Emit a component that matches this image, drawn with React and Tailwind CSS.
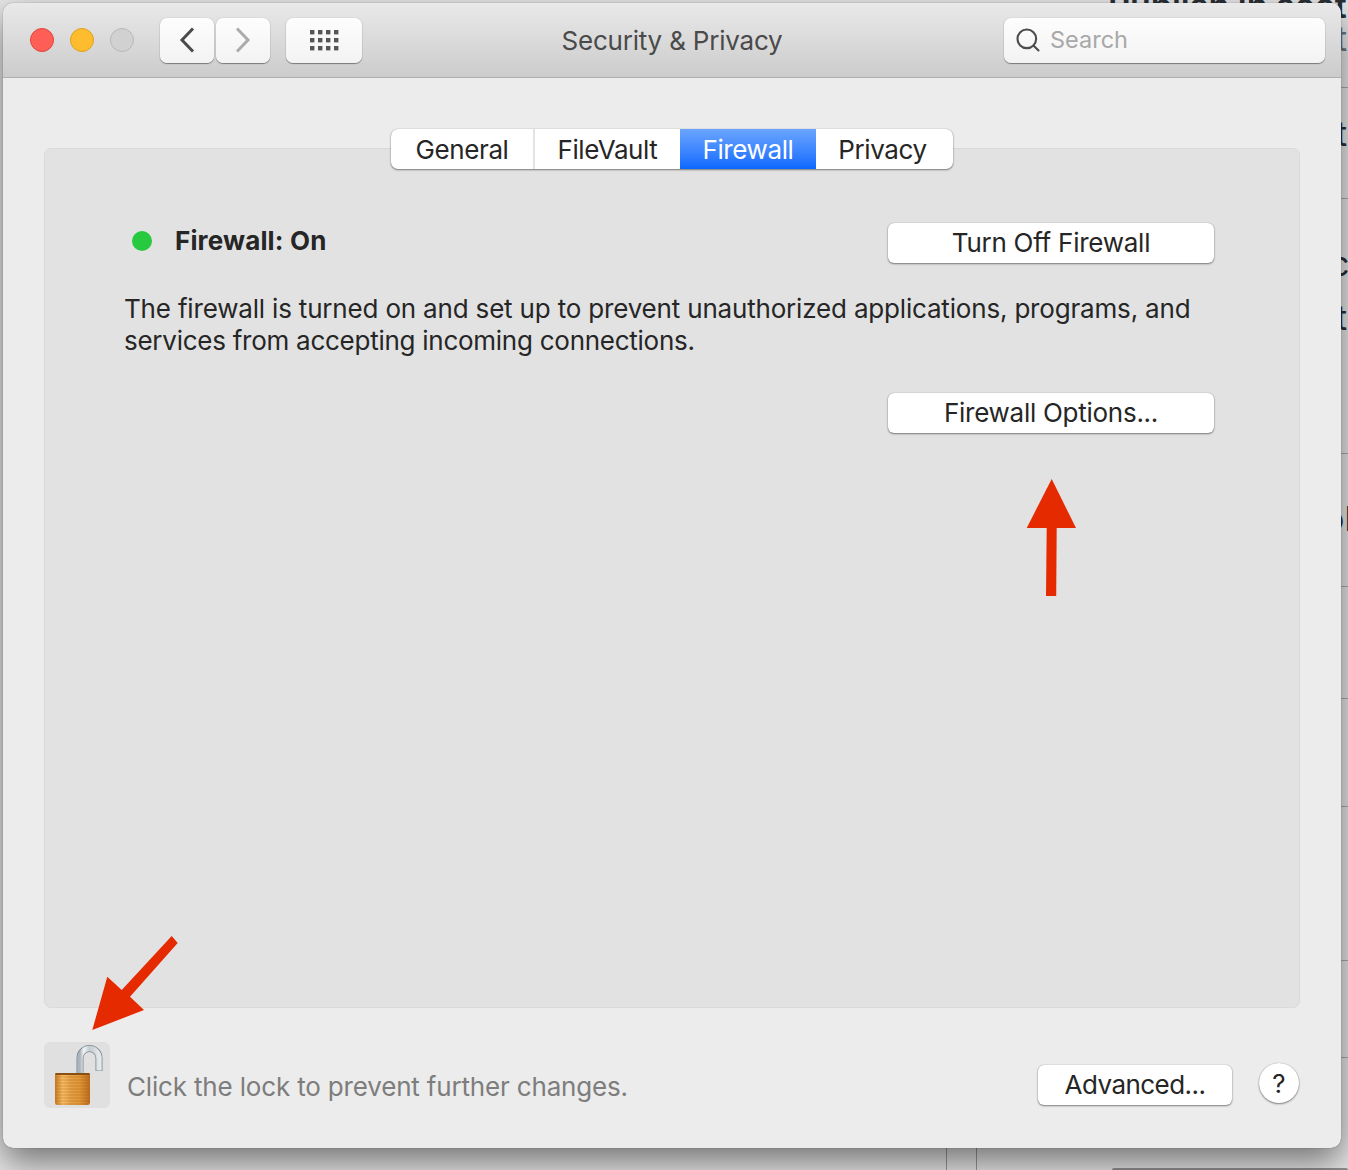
import React from "react";
import { Search } from "lucide-react";

const FONT = "font-['Inter','Noto_Sans',sans-serif]";

// macOS style white push button
const MacButton = ({ children, className = "" }) => (
  <button className={`flex items-center justify-center rounded-[6px] bg-white text-[26px] leading-none text-[#262626] shadow-[0_1px_2px_rgba(0,0,0,0.45),0_0_1px_rgba(0,0,0,0.35)] ${className}`}>
    {children}
  </button>
);

const ToolButton = ({ children, className = "" }) => (
  <div className={`flex h-[45px] items-center justify-center rounded-[7px] bg-gradient-to-b from-[#fdfdfd] to-[#f3f3f3] shadow-[0_1px_1px_rgba(0,0,0,0.4),0_0_1px_rgba(0,0,0,0.35)] ${className}`}>
    {children}
  </div>
);

const Chevron = ({ points, color }) => (
  <svg width="16" height="26" viewBox="0 0 16 26">
    <polyline points={points} fill="none" stroke={color} strokeWidth="3" />
  </svg>
);

const GridIcon = () => (
  <svg width="30" height="22" viewBox="0 0 30 22" fill="#555">
    {[0, 8, 16].map((y) =>
      [0, 8, 16, 24].map((x) => <rect key={`${x}-${y}`} x={x + 1} y={y + 1} width="4.4" height="4.4" />)
    )}
  </svg>
);

const Tab = ({ label, active, className = "" }) => (
  <div className={`flex h-full items-center justify-center text-[26px] tracking-[-0.4px] ${active ? "bg-gradient-to-b from-[#6aa5ff] to-[#0a68fe] text-white" : "text-[#262626]"} ${className}`}>
    {label}
  </div>
);

const OpenLock = () => (
  <svg width="66" height="66" viewBox="0 0 66 66">
    <defs>
      <linearGradient id="shackle" x1="0" y1="0" x2="1" y2="0">
        <stop offset="0" stopColor="#aab4bc" />
        <stop offset="0.2" stopColor="#f2f5f6" />
        <stop offset="0.5" stopColor="#c3ccd2" />
        <stop offset="1" stopColor="#e3e8ea" />
      </linearGradient>
      <linearGradient id="brass" x1="0" y1="0" x2="1" y2="0">
        <stop offset="0" stopColor="#c77a22" />
        <stop offset="0.22" stopColor="#f6bd66" />
        <stop offset="0.45" stopColor="#e6a248" />
        <stop offset="0.7" stopColor="#e09838" />
        <stop offset="1" stopColor="#bb6c1e" />
      </linearGradient>
    </defs>
    <path d="M36 33 V16 A9.5 9.5 0 0 1 55 16 V29" fill="none" stroke="#7f8b95" strokeWidth="7" />
    <path d="M36 33 V16 A9.5 9.5 0 0 1 55 16 V28.5" fill="none" stroke="url(#shackle)" strokeWidth="5.4" />
    <path d="M12 31 H45 Q46 31 46 33 L46 60 Q46 63 43 63 H14 Q11 63 11 60 L11 33 Q11 31 12 31 Z" fill="url(#brass)" />
    {[35, 38, 41, 44, 47, 50, 53, 56, 59, 62].map((y) => (
      <line key={y} x1="11" x2="46" y1={y} y2={y} stroke="#a3590f" strokeOpacity="0.35" strokeWidth="1" />
    ))}
    <rect x="11.5" y="31" width="34" height="2" fill="#8a4f14" />
  </svg>
);

// Red annotation arrows drawn on top of the window
const ArrowUp = () => (
  <svg className="absolute left-[1026px] top-[478px]" width="52" height="120" viewBox="0 0 52 120">
    <polygon points="25.7,1 50,50 0.7,50" fill="#e62a00" />
    <polygon points="20.7,49 30.7,49 30.2,118 20,118" fill="#e62a00" />
  </svg>
);

const ArrowDownLeft = () => (
  <svg className="absolute left-[90px] top-[934px]" width="90" height="100" viewBox="0 0 90 100">
    <polygon points="81.7,2 31.7,56 17.3,42.7 2.3,96 54,76 40,62.7 87.7,9" fill="#e62a00" />
  </svg>
);

const App = () => {
  return (
    <div className={`relative h-[1170px] w-[1348px] overflow-hidden ${FONT}`}>
      {/* page behind the window */}
      <div className="absolute inset-0 bg-[#e6e6e6]">
        <div className="absolute left-[1108px] top-[-20px] text-[34px] font-semibold text-[#2a2f36]">Publish in sect</div>
        {[87, 198, 453, 586, 698, 806, 960, 1057].map((y) => (
          <div key={y} className="absolute left-[1335px] h-px w-[13px] bg-[#a9a9a9]" style={{ top: y }} />
        ))}
        <div className="absolute left-[1336px] top-[13px] text-[34px] text-[#6b7580]">t</div>
        <div className="absolute left-[1336px] top-[108px] text-[34px] text-[#2a2f36]">t</div>
        <div className="absolute left-[1330px] top-[238px] text-[34px] text-[#2a2f36]">c</div>
        <div className="absolute left-[1336px] top-[292px] text-[34px] text-[#2a2f36]">t</div>
        <div className="absolute left-[1324px] top-[493px] text-[34px] text-[#2a2f36]">ol</div>
        <div className="absolute bottom-0 left-[946px] h-[24px] w-px bg-[#999]" />
        <div className="absolute bottom-0 left-[976px] h-[24px] w-px bg-[#999]" />
        <div className="absolute bottom-0 left-[1112px] h-[2px] w-[236px] rounded-t-[3px] bg-[#8f8f8f]" />
      </div>

      {/* preferences window */}
      <div className="absolute left-[3px] top-[3px] flex h-[1145px] w-[1338px] flex-col overflow-hidden rounded-[10px] bg-[#ececec] shadow-[0_0_1px_rgba(0,0,0,0.6),0_14px_34px_rgba(0,0,0,0.5)]">
        {/* title bar */}
        <div className="relative flex h-[75px] shrink-0 items-center border-b border-[#aeaeae] bg-gradient-to-b from-[#e9e9e9] to-[#cccccc] pl-[27px] pr-[16px]">
          <div className="flex items-center gap-[16px]">
            <span className="h-[24px] w-[24px] rounded-full border border-[#e0443e] bg-[#fd5f57]" />
            <span className="h-[24px] w-[24px] rounded-full border border-[#dea123] bg-[#febc2e]" />
            <span className="h-[24px] w-[24px] rounded-full border border-[#b8b8b8] bg-[#d1d1d1]" />
          </div>
          <div className="ml-[26px] flex gap-[2px]">
            <ToolButton className="w-[54px]">
              <Chevron points="14,1.5 3,13 14,24.5" color="#4a4a4a" />
            </ToolButton>
            <ToolButton className="w-[54px]">
              <Chevron points="2,1.5 13,13 2,24.5" color="#ababab" />
            </ToolButton>
          </div>
          <ToolButton className="ml-[16px] w-[76px]">
            <GridIcon />
          </ToolButton>
          <div className="absolute left-0 top-0 flex h-full w-[1338px] items-center justify-center text-[26px] tracking-[-0.2px] text-[#4a4a4a]">
            Security &amp; Privacy
          </div>
          <div className="relative ml-auto flex h-[45px] w-[321px] items-center gap-[8px] rounded-[7px] bg-gradient-to-b from-[#fdfdfd] to-[#f3f3f3] pl-[10px] text-[23.5px] text-[#a8a8a8] shadow-[0_1px_1px_rgba(0,0,0,0.4),0_0_1px_rgba(0,0,0,0.35)]">
            <Search size={28} strokeWidth={1.8} color="#4d4d4d" />
            <span>Search</span>
          </div>
        </div>

        {/* body */}
        <div className="flex flex-1 flex-col px-[41px] pt-[51px]">
          <div className="z-10 -mb-[21px] flex h-[40px] w-[562px] self-center overflow-hidden rounded-[7px] bg-white shadow-[0_1px_2px_rgba(0,0,0,0.45),0_0_1px_rgba(0,0,0,0.35)]">
            <Tab label="General" className="w-[144px] border-r-2 border-[#e4e4e4]" />
            <Tab label="FileVault" className="w-[145px]" />
            <Tab label="Firewall" active className="w-[136px]" />
            <Tab label="Privacy" className="w-[137px] pr-[4px]" />
          </div>

          <div className="flex h-[860px] flex-col rounded-[7px] border border-[#dadada] bg-[#e2e2e2] pl-[79px] pr-[85px] pt-[74px]">
            <div className="flex h-[40px] items-center justify-between">
              <div className="flex items-center gap-[23px] pb-[4px] pl-[8px]">
                <span className="h-[20px] w-[20px] rounded-full bg-[#27c93f]" />
                <span className="text-[26px] font-bold leading-[32px] tracking-[0.15px] text-[#262626]">Firewall: On</span>
              </div>
              <MacButton className="h-[40px] w-[326px] tracking-[-0.25px]">Turn Off Firewall</MacButton>
            </div>
            <p className="mt-[30px] text-[26px] leading-[32px] tracking-[-0.18px] text-[#262626]">
              The firewall is turned on and set up to prevent unauthorized applications, programs, and
              <br />
              <span className="tracking-[-0.26px]">services from accepting incoming connections.</span>
            </p>
            <MacButton className="mt-[36px] h-[40px] w-[326px] self-end tracking-[-0.27px]">Firewall Options...</MacButton>
          </div>

          {/* footer */}
          <div className="relative mt-[34px] flex items-start">
            <div className="h-[66px] w-[66px] rounded-[6px] bg-[#e0e0e0]">
              <OpenLock />
            </div>
            <span className="ml-[17px] mt-[29px] text-[26px] leading-[32px] tracking-[-0.17px] text-[#7d7d7d]">
              Click the lock to prevent further changes.
            </span>
            <MacButton className="ml-auto mr-[27px] mt-[23px] h-[40px] w-[194px] tracking-[-0.55px]">Advanced...</MacButton>
            <div className="mr-[1px] mt-[21px] flex h-[40px] w-[40px] items-center justify-center rounded-full bg-white text-[26px] text-[#262626] shadow-[0_1px_2px_rgba(0,0,0,0.45),0_0_1px_rgba(0,0,0,0.35)]">
              ?
            </div>
          </div>
        </div>
      </div>

      <ArrowUp />
      <ArrowDownLeft />
    </div>
  );
};

export default App;
